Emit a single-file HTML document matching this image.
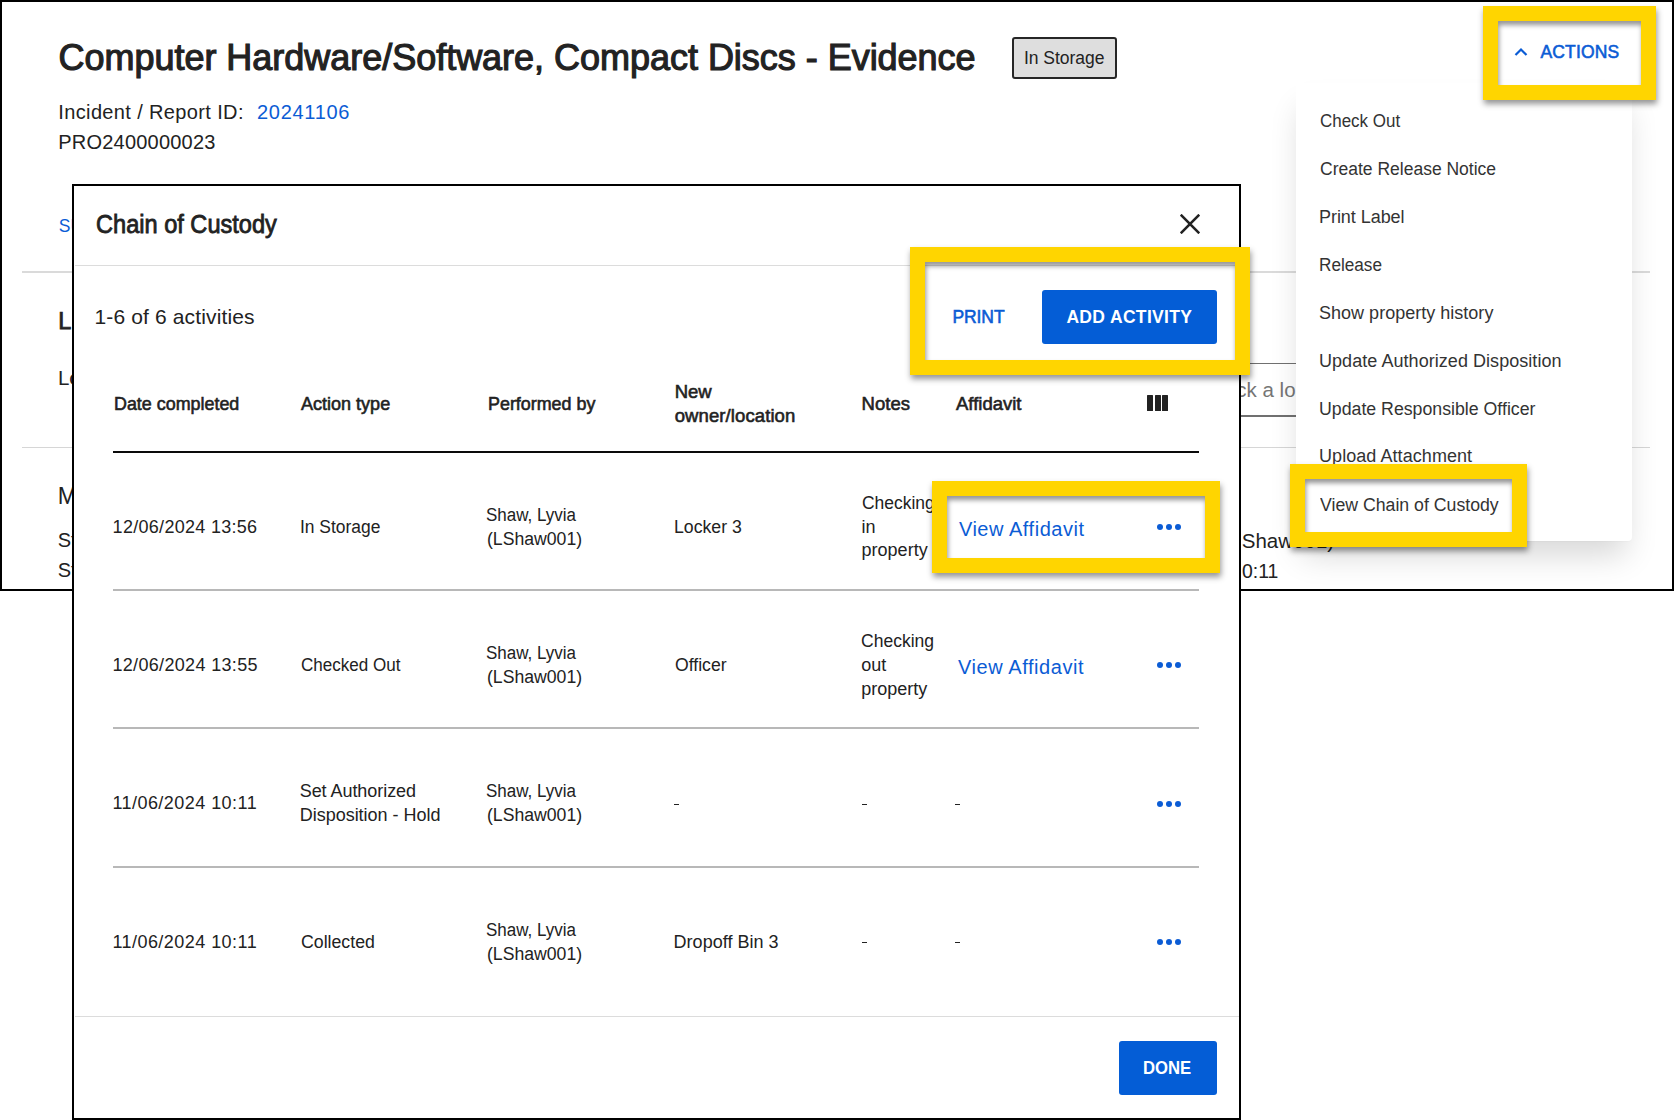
<!DOCTYPE html><html><head><meta charset="utf-8"><style>
html,body{margin:0;padding:0}body{width:1674px;height:1120px;position:relative;overflow:hidden;background:#fff;font-family:"Liberation Sans",sans-serif}
.t{position:absolute;white-space:nowrap;line-height:1;font-family:"Liberation Sans",sans-serif}
.yb{position:absolute;box-sizing:border-box;border:15px solid #ffd500;box-shadow:0.5px 4px 6px rgba(0,0,0,.42), inset 1px 4px 5px rgba(0,0,0,.42)}
</style></head><body>
<div style="position:absolute;left:22px;top:271px;width:1628px;height:2px;z-index:1;background:#dadada"></div>
<div style="position:absolute;left:22px;top:447px;width:1628px;height:1px;z-index:1;background:#d6d6d6"></div>
<div style="position:absolute;left:1200px;top:362.8px;width:140px;height:1.5px;z-index:1;background:#707070"></div>
<div style="position:absolute;left:1200px;top:415.3px;width:140px;height:1.5px;z-index:1;background:#707070"></div>
<div style="position:absolute;left:1012px;top:37px;width:105px;height:42px;z-index:1;box-sizing:border-box;border:2px solid #262626;border-radius:3px;background:#dedede"></div>
<svg style="position:absolute;left:1512px;top:44px;z-index:1" width="18" height="16" viewBox="0 0 18 16"><path d="M3.5 11 L9 5.5 L14.5 11" fill="none" stroke="#0b5cd5" stroke-width="2.2"/></svg>
<div style="position:absolute;left:0px;top:0px;width:1674px;height:2px;z-index:2;background:#000"></div>
<div style="position:absolute;left:0px;top:0px;width:2px;height:591px;z-index:2;background:#000"></div>
<div style="position:absolute;left:1672px;top:0px;width:2px;height:591px;z-index:2;background:#000"></div>
<div style="position:absolute;left:0px;top:589px;width:1674px;height:2px;z-index:2;background:#000"></div>
<div style="position:absolute;left:1295.5px;top:83px;width:336px;height:458px;z-index:3;background:#fff;border-radius:4px;box-shadow:0 20px 30px -6px rgba(0,0,0,.16),0 1px 0 rgba(0,0,0,.015)"></div>
<div style="position:absolute;left:72px;top:184px;width:1169px;height:936px;z-index:10;box-sizing:border-box;border:2px solid #000;background:#fff"></div>
<div style="position:absolute;left:75px;top:265px;width:1164px;height:1px;z-index:10;background:#dcdcdc"></div>
<div style="position:absolute;left:75px;top:1016px;width:1164px;height:1px;z-index:10;background:#dcdcdc"></div>
<svg style="position:absolute;left:1180px;top:214px;z-index:10" width="20" height="20" viewBox="0 0 20 20"><path d="M0.7 0.7 L19.3 19.3 M19.3 0.7 L0.7 19.3" fill="none" stroke="#222" stroke-width="2.6"/></svg>
<div style="position:absolute;left:1042px;top:290px;width:175px;height:53.5px;z-index:10;background:#045dd6;border-radius:3px"></div>
<div style="position:absolute;left:1119px;top:1041px;width:98px;height:54px;z-index:10;background:#045dd6;border-radius:3px"></div>
<div style="position:absolute;left:113px;top:451px;width:1086px;height:2px;z-index:10;background:#0a0a0a"></div>
<div style="position:absolute;left:113px;top:589px;width:1086px;height:2px;z-index:10;background:#b8b8b8"></div>
<div style="position:absolute;left:113px;top:727px;width:1086px;height:2px;z-index:10;background:#b8b8b8"></div>
<div style="position:absolute;left:113px;top:866px;width:1086px;height:2px;z-index:10;background:#b8b8b8"></div>
<div style="position:absolute;left:1147px;top:395.3px;width:5.6px;height:16px;z-index:10;background:#222;border-radius:0.5px"></div>
<div style="position:absolute;left:1155px;top:395.3px;width:5.6px;height:16px;z-index:10;background:#222;border-radius:0.5px"></div>
<div style="position:absolute;left:1162.3px;top:395.3px;width:5.6px;height:16px;z-index:10;background:#222;border-radius:0.5px"></div>
<div style="position:absolute;left:674px;top:803.8px;width:5px;height:1.6px;z-index:10;background:#222"></div>
<div style="position:absolute;left:861.5px;top:803.8px;width:5px;height:1.6px;z-index:10;background:#222"></div>
<div style="position:absolute;left:955px;top:803.8px;width:5px;height:1.6px;z-index:10;background:#222"></div>
<div style="position:absolute;left:861.5px;top:941.8px;width:5px;height:1.6px;z-index:10;background:#222"></div>
<div style="position:absolute;left:955px;top:941.8px;width:5px;height:1.6px;z-index:10;background:#222"></div>
<div style="position:absolute;left:1157px;top:524px;width:6px;height:6px;z-index:10;background:#0b5cd5;border-radius:50%"></div>
<div style="position:absolute;left:1166px;top:524px;width:6px;height:6px;z-index:10;background:#0b5cd5;border-radius:50%"></div>
<div style="position:absolute;left:1175px;top:524px;width:6px;height:6px;z-index:10;background:#0b5cd5;border-radius:50%"></div>
<div style="position:absolute;left:1157px;top:662px;width:6px;height:6px;z-index:10;background:#0b5cd5;border-radius:50%"></div>
<div style="position:absolute;left:1166px;top:662px;width:6px;height:6px;z-index:10;background:#0b5cd5;border-radius:50%"></div>
<div style="position:absolute;left:1175px;top:662px;width:6px;height:6px;z-index:10;background:#0b5cd5;border-radius:50%"></div>
<div style="position:absolute;left:1157px;top:800.7px;width:6px;height:6px;z-index:10;background:#0b5cd5;border-radius:50%"></div>
<div style="position:absolute;left:1166px;top:800.7px;width:6px;height:6px;z-index:10;background:#0b5cd5;border-radius:50%"></div>
<div style="position:absolute;left:1175px;top:800.7px;width:6px;height:6px;z-index:10;background:#0b5cd5;border-radius:50%"></div>
<div style="position:absolute;left:1157px;top:939px;width:6px;height:6px;z-index:10;background:#0b5cd5;border-radius:50%"></div>
<div style="position:absolute;left:1166px;top:939px;width:6px;height:6px;z-index:10;background:#0b5cd5;border-radius:50%"></div>
<div style="position:absolute;left:1175px;top:939px;width:6px;height:6px;z-index:10;background:#0b5cd5;border-radius:50%"></div>
<div class="t" style="left:58.50px;top:40.00px;font-size:36px;letter-spacing:-0.024px;color:#222222;z-index:1;font-weight:400;-webkit-text-stroke:1.15px currentColor;">Computer Hardware/Software, Compact Discs - Evidence</div>
<div class="t" style="left:1024.00px;top:49.50px;font-size:17.5px;letter-spacing:-0.033px;color:#222222;z-index:1;font-weight:400;">In Storage</div>
<div class="t" style="left:58.30px;top:101.70px;font-size:20px;letter-spacing:0.365px;color:#222222;z-index:1;font-weight:400;">Incident / Report ID:</div>
<div class="t" style="left:257.00px;top:101.70px;font-size:20px;letter-spacing:0.714px;color:#0b5cd5;z-index:1;font-weight:400;">20241106</div>
<div class="t" style="left:58.30px;top:131.70px;font-size:20px;letter-spacing:0.208px;color:#222222;z-index:1;font-weight:400;">PRO2400000023</div>
<div class="t" style="left:58.80px;top:217.80px;font-size:17.5px;letter-spacing:0.000px;color:#0b5cd5;z-index:1;font-weight:400;">SUMMARY</div>
<div class="t" style="left:58.30px;top:309.80px;font-size:23.5px;letter-spacing:0.000px;color:#222222;z-index:1;font-weight:400;-webkit-text-stroke:0.75px currentColor;">L</div>
<div class="t" style="left:57.90px;top:367.80px;font-size:20.5px;letter-spacing:0.000px;color:#222222;z-index:1;font-weight:400;">Location</div>
<div class="t" style="left:57.75px;top:485.00px;font-size:23px;letter-spacing:0.000px;color:#222222;z-index:1;font-weight:400;">Management</div>
<div class="t" style="left:57.75px;top:530.40px;font-size:20px;letter-spacing:0.000px;color:#222222;z-index:1;font-weight:400;">Status</div>
<div class="t" style="left:57.75px;top:560.30px;font-size:20px;letter-spacing:0.000px;color:#222222;z-index:1;font-weight:400;">Stored</div>
<div class="t" style="left:1218.10px;top:379.80px;font-size:20.5px;letter-spacing:0.000px;color:#757575;z-index:1;font-weight:400;">Pick a lo</div>
<div class="t" style="left:1241.80px;top:530.80px;font-size:20.5px;letter-spacing:0.000px;color:#222222;z-index:1;font-weight:400;">Shaw001)</div>
<div class="t" style="left:1242.00px;top:560.80px;font-size:20.5px;letter-spacing:0.000px;color:#222222;z-index:1;transform:scaleX(0.9474);transform-origin:0 0;font-weight:400;">0:11</div>
<div class="t" style="left:1540.50px;top:43.90px;font-size:17.5px;letter-spacing:0.133px;color:#0b5cd5;z-index:1;font-weight:400;-webkit-text-stroke:0.56px currentColor;">ACTIONS</div>
<div class="t" style="left:1320.00px;top:112.10px;font-size:18px;letter-spacing:0.000px;color:#333333;z-index:3;transform:scaleX(0.9419);transform-origin:0 0;font-weight:400;">Check Out</div>
<div class="t" style="left:1320.00px;top:160.00px;font-size:18px;letter-spacing:0.000px;color:#333333;z-index:3;transform:scaleX(0.9724);transform-origin:0 0;font-weight:400;">Create Release Notice</div>
<div class="t" style="left:1319.00px;top:207.60px;font-size:18px;letter-spacing:-0.050px;color:#333333;z-index:3;font-weight:400;">Print Label</div>
<div class="t" style="left:1319.05px;top:256.00px;font-size:18px;letter-spacing:0.000px;color:#333333;z-index:3;transform:scaleX(0.9538);transform-origin:0 0;font-weight:400;">Release</div>
<div class="t" style="left:1319.00px;top:303.50px;font-size:18px;letter-spacing:0.015px;color:#333333;z-index:3;font-weight:400;">Show property history</div>
<div class="t" style="left:1319.00px;top:351.70px;font-size:18px;letter-spacing:0.050px;color:#333333;z-index:3;font-weight:400;">Update Authorized Disposition</div>
<div class="t" style="left:1319.02px;top:400.00px;font-size:18px;letter-spacing:0.000px;color:#333333;z-index:3;transform:scaleX(0.9849);transform-origin:0 0;font-weight:400;">Update Responsible Officer</div>
<div class="t" style="left:1319.00px;top:447.40px;font-size:18px;letter-spacing:0.062px;color:#333333;z-index:3;font-weight:400;">Upload Attachment</div>
<div class="t" style="left:1320.00px;top:495.60px;font-size:18px;letter-spacing:0.000px;color:#333333;z-index:3;transform:scaleX(0.9830);transform-origin:0 0;font-weight:400;">View Chain of Custody</div>
<div class="t" style="left:95.50px;top:211.50px;font-size:25px;letter-spacing:0.000px;color:#222222;z-index:10;transform:scaleX(0.9430);transform-origin:0 0;font-weight:400;-webkit-text-stroke:0.80px currentColor;">Chain of Custody</div>
<div class="t" style="left:94.50px;top:305.80px;font-size:21px;letter-spacing:0.139px;color:#222222;z-index:10;font-weight:400;">1-6 of 6 activities</div>
<div class="t" style="left:952.40px;top:308.90px;font-size:17.5px;letter-spacing:-0.075px;color:#0b5cd5;z-index:10;font-weight:400;-webkit-text-stroke:0.56px currentColor;">PRINT</div>
<div class="t" style="left:1066.40px;top:308.90px;font-size:17.5px;letter-spacing:0.345px;color:#ffffff;z-index:10;font-weight:700;">ADD ACTIVITY</div>
<div class="t" style="left:113.60px;top:395.40px;font-size:18.5px;letter-spacing:0.000px;color:#222222;z-index:10;transform:scaleX(0.9669);transform-origin:0 0;font-weight:400;-webkit-text-stroke:0.59px currentColor;">Date completed</div>
<div class="t" style="left:301.17px;top:395.40px;font-size:18.5px;letter-spacing:0.000px;color:#222222;z-index:10;transform:scaleX(0.9742);transform-origin:0 0;font-weight:400;-webkit-text-stroke:0.59px currentColor;">Action type</div>
<div class="t" style="left:487.60px;top:395.40px;font-size:18.5px;letter-spacing:0.000px;color:#222222;z-index:10;transform:scaleX(0.9670);transform-origin:0 0;font-weight:400;-webkit-text-stroke:0.59px currentColor;">Performed by</div>
<div class="t" style="left:674.70px;top:383.20px;font-size:18.5px;letter-spacing:0.000px;color:#222222;z-index:10;font-weight:400;-webkit-text-stroke:0.59px currentColor;">New</div>
<div class="t" style="left:674.70px;top:406.60px;font-size:18.5px;letter-spacing:0.100px;color:#222222;z-index:10;font-weight:400;-webkit-text-stroke:0.59px currentColor;">owner/location</div>
<div class="t" style="left:861.60px;top:395.40px;font-size:18.5px;letter-spacing:0.000px;color:#222222;z-index:10;font-weight:400;-webkit-text-stroke:0.59px currentColor;">Notes</div>
<div class="t" style="left:956.00px;top:395.20px;font-size:18.5px;letter-spacing:0.000px;color:#222222;z-index:10;font-weight:400;-webkit-text-stroke:0.59px currentColor;">Affidavit</div>
<div class="t" style="left:112.60px;top:518.00px;font-size:18px;letter-spacing:0.293px;color:#222222;z-index:10;font-weight:400;">12/06/2024 13:56</div>
<div class="t" style="left:299.73px;top:518.00px;font-size:18px;letter-spacing:0.000px;color:#222222;z-index:10;transform:scaleX(0.9671);transform-origin:0 0;font-weight:400;">In Storage</div>
<div class="t" style="left:486.46px;top:505.60px;font-size:18px;letter-spacing:0.000px;color:#222222;z-index:10;transform:scaleX(0.9432);transform-origin:0 0;font-weight:400;">Shaw, Lyvia</div>
<div class="t" style="left:487.40px;top:529.50px;font-size:18px;letter-spacing:0.000px;color:#222222;z-index:10;transform:scaleX(0.9794);transform-origin:0 0;font-weight:400;">(LShaw001)</div>
<div class="t" style="left:673.72px;top:518.00px;font-size:18px;letter-spacing:0.000px;color:#222222;z-index:10;transform:scaleX(0.9824);transform-origin:0 0;font-weight:400;">Locker 3</div>
<div class="t" style="left:861.60px;top:493.70px;font-size:18px;letter-spacing:0.000px;color:#222222;z-index:10;transform:scaleX(0.9693);transform-origin:0 0;font-weight:400;">Checking</div>
<div class="t" style="left:861.60px;top:517.90px;font-size:18px;letter-spacing:0.000px;color:#222222;z-index:10;font-weight:400;">in</div>
<div class="t" style="left:861.60px;top:541.20px;font-size:18px;letter-spacing:0.000px;color:#222222;z-index:10;font-weight:400;">property</div>
<div class="t" style="left:958.90px;top:518.70px;font-size:20px;letter-spacing:0.531px;color:#0b5cd5;z-index:10;font-weight:400;">View Affidavit</div>
<div class="t" style="left:112.40px;top:656.40px;font-size:18px;letter-spacing:0.333px;color:#222222;z-index:10;font-weight:400;">12/06/2024 13:55</div>
<div class="t" style="left:300.70px;top:656.40px;font-size:18px;letter-spacing:0.000px;color:#222222;z-index:10;transform:scaleX(0.9462);transform-origin:0 0;font-weight:400;">Checked Out</div>
<div class="t" style="left:486.46px;top:643.80px;font-size:18px;letter-spacing:0.000px;color:#222222;z-index:10;transform:scaleX(0.9432);transform-origin:0 0;font-weight:400;">Shaw, Lyvia</div>
<div class="t" style="left:487.40px;top:667.70px;font-size:18px;letter-spacing:0.000px;color:#222222;z-index:10;transform:scaleX(0.9794);transform-origin:0 0;font-weight:400;">(LShaw001)</div>
<div class="t" style="left:674.80px;top:655.90px;font-size:18px;letter-spacing:0.000px;color:#222222;z-index:10;transform:scaleX(0.9792);transform-origin:0 0;font-weight:400;">Officer</div>
<div class="t" style="left:861.30px;top:632.00px;font-size:18px;letter-spacing:0.000px;color:#222222;z-index:10;transform:scaleX(0.9733);transform-origin:0 0;font-weight:400;">Checking</div>
<div class="t" style="left:861.30px;top:656.00px;font-size:18px;letter-spacing:0.000px;color:#222222;z-index:10;font-weight:400;">out</div>
<div class="t" style="left:861.30px;top:679.50px;font-size:18px;letter-spacing:0.000px;color:#222222;z-index:10;font-weight:400;">property</div>
<div class="t" style="left:958.00px;top:657.20px;font-size:20px;letter-spacing:0.569px;color:#0b5cd5;z-index:10;font-weight:400;">View Affidavit</div>
<div class="t" style="left:112.40px;top:794.30px;font-size:18px;letter-spacing:0.453px;color:#222222;z-index:10;font-weight:400;">11/06/2024 10:11</div>
<div class="t" style="left:299.70px;top:782.30px;font-size:18px;letter-spacing:-0.054px;color:#222222;z-index:10;font-weight:400;">Set Authorized</div>
<div class="t" style="left:299.70px;top:806.20px;font-size:18px;letter-spacing:-0.012px;color:#222222;z-index:10;font-weight:400;">Disposition - Hold</div>
<div class="t" style="left:486.46px;top:782.30px;font-size:18px;letter-spacing:0.000px;color:#222222;z-index:10;transform:scaleX(0.9432);transform-origin:0 0;font-weight:400;">Shaw, Lyvia</div>
<div class="t" style="left:487.40px;top:806.20px;font-size:18px;letter-spacing:0.000px;color:#222222;z-index:10;transform:scaleX(0.9794);transform-origin:0 0;font-weight:400;">(LShaw001)</div>
<div class="t" style="left:112.40px;top:932.60px;font-size:18px;letter-spacing:0.453px;color:#222222;z-index:10;font-weight:400;">11/06/2024 10:11</div>
<div class="t" style="left:300.70px;top:932.60px;font-size:18px;letter-spacing:0.000px;color:#222222;z-index:10;transform:scaleX(0.9840);transform-origin:0 0;font-weight:400;">Collected</div>
<div class="t" style="left:486.46px;top:920.50px;font-size:18px;letter-spacing:0.000px;color:#222222;z-index:10;transform:scaleX(0.9432);transform-origin:0 0;font-weight:400;">Shaw, Lyvia</div>
<div class="t" style="left:487.40px;top:945.10px;font-size:18px;letter-spacing:0.000px;color:#222222;z-index:10;transform:scaleX(0.9794);transform-origin:0 0;font-weight:400;">(LShaw001)</div>
<div class="t" style="left:673.60px;top:932.80px;font-size:18px;letter-spacing:0.017px;color:#222222;z-index:10;font-weight:400;">Dropoff Bin 3</div>
<div class="t" style="left:1143.40px;top:1060.20px;font-size:17.5px;letter-spacing:0.000px;color:#ffffff;z-index:10;transform:scaleX(0.9529);transform-origin:0 0;font-weight:700;">DONE</div>
<div class="yb" style="left:1483px;top:6px;width:173px;height:94px;z-index:50"></div>
<div class="yb" style="left:910px;top:247px;width:340px;height:128px;z-index:50"></div>
<div class="yb" style="left:932px;top:481px;width:288px;height:91.5px;z-index:50"></div>
<div class="yb" style="left:1290px;top:464px;width:237px;height:83px;z-index:50"></div>
</body></html>
